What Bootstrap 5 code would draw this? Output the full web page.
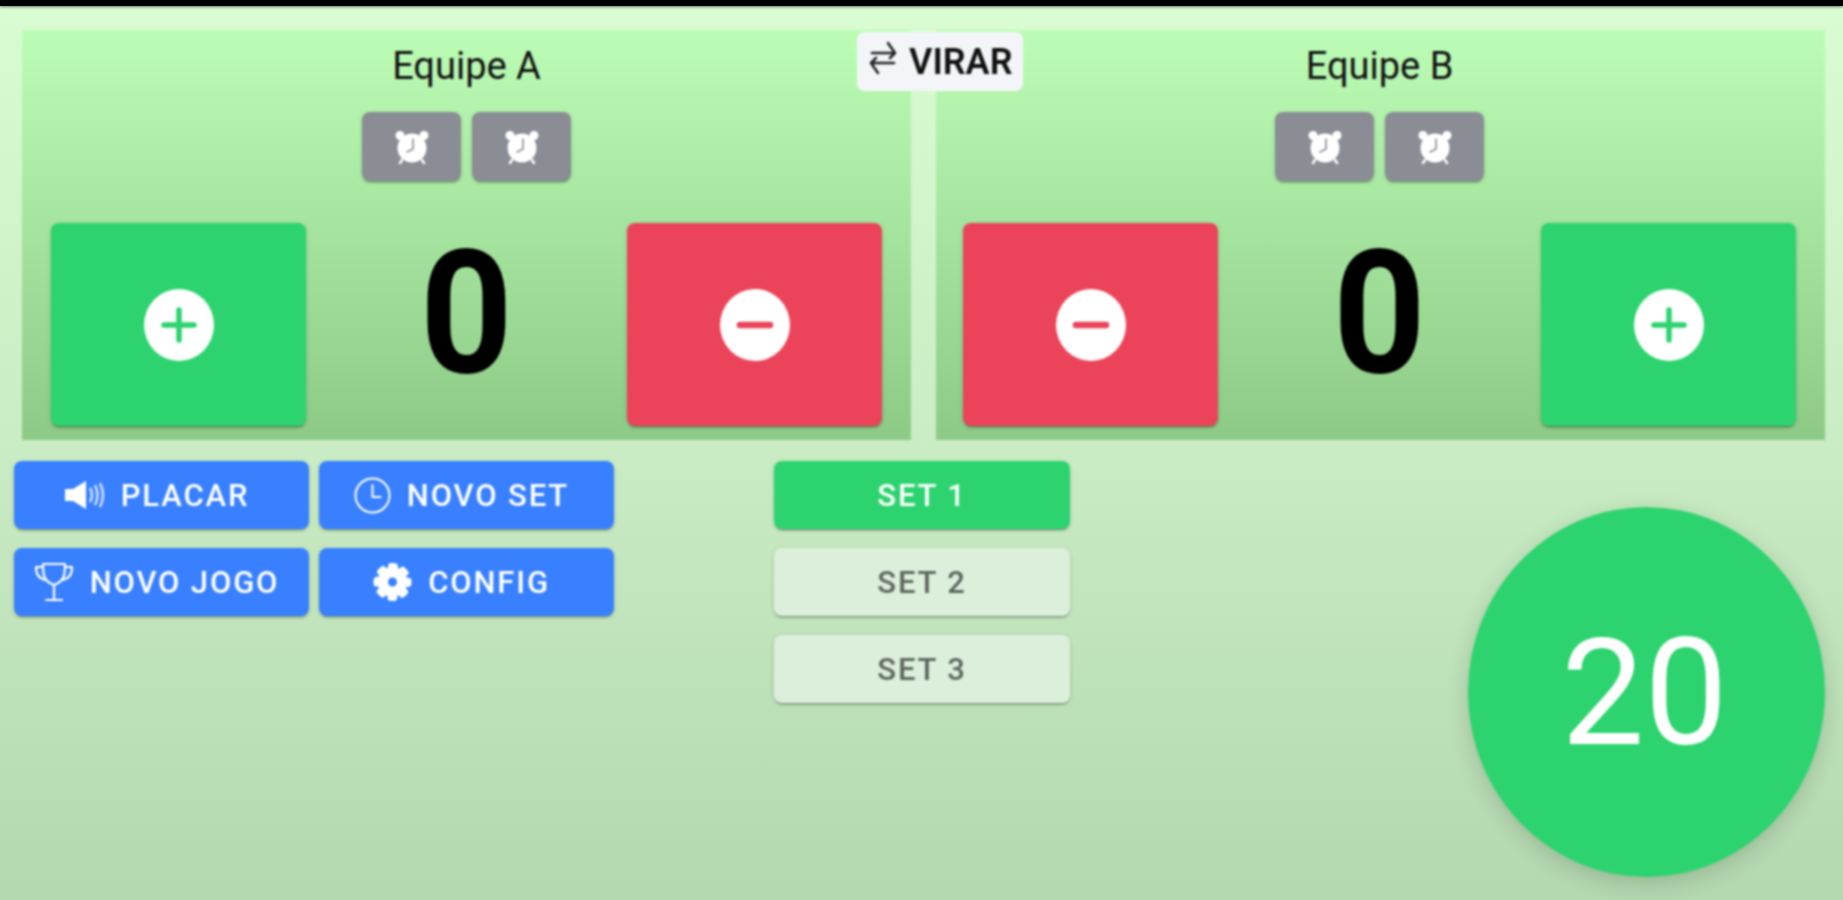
<!DOCTYPE html>
<html lang="pt">
<head>
<meta charset="utf-8">
<title>Placar</title>
<link href="https://cdn.jsdelivr.net/npm/bootstrap@5.3.0/dist/css/bootstrap.min.css" rel="stylesheet">
<style>
html,body{height:900px;overflow:hidden}
body{font-family:Roboto,"Liberation Sans",sans-serif;background:linear-gradient(180deg,#d9fcd2 0,#c9ecc4 50%,#b3d7af 100%);}
.topbar{height:6px;background:#000;box-shadow:0 1px 3px rgba(0,0,0,.5)}
.stage{position:relative;filter:blur(.9px);height:894px}
.panels{padding:24px 18px 0 22px;gap:25px}
.panel{width:889px;height:410px;padding:0 29px 14px 29px;background:linear-gradient(180deg,#bcfdb6 0,#8dca86 100%)}
.panel-right{padding-left:27px}
.team{font-size:38px;line-height:44px;margin-top:14px;height:68px;color:#111}
.alarms{gap:11px;height:69px;margin-bottom:42px}
.tbtn{--bs-btn-padding-x:0;--bs-btn-padding-y:0;--bs-btn-border-width:0;--bs-btn-border-radius:8px;border:0;border-radius:8px;box-shadow:0 3px 1px -2px rgba(0,0,0,.2),0 2px 2px rgba(0,0,0,.14),0 1px 5px rgba(0,0,0,.12);display:flex;align-items:center;justify-content:center;color:#fff}
.tbtn:hover,.tbtn:active{color:#fff}
.alarm-btn{width:99px;height:69px;background:#8b8d95}
.alarm-btn:hover{background:#8b8d95}
.big-btn{width:255px;height:203px}
.c-green,.c-green:hover{background:#2dd36f}
.c-red,.c-red:hover{background:#eb445a}
.c-blue,.c-blue:hover{background:#3880ff}
.score{font-size:172px;font-weight:700;line-height:172px;color:#000;margin-top:-24px;flex:1;text-align:center}
.score span{display:inline-block;transform:scaleX(.94)}
.flipper{position:absolute;left:857px;top:26px;width:166px;height:59px;background:#f4f5f8;border-radius:8px;color:#111;font-size:36px;font-weight:600;gap:12px;padding-left:12px}
.flipper svg{margin-top:-7px}
.lower{padding:21px 18px 0 14px}
.actions{display:grid;grid-template-columns:295px 295px;column-gap:10px;row-gap:19px;width:600px;height:154px}
.label-btn{height:68px;font-size:31px;font-weight:500;letter-spacing:.06em;line-height:1}
.actions .label-btn{padding-right:10px}
.sets{margin-left:160px;width:296px;gap:19px}
.sets .tbtn{width:296px}
.c-soft,.c-soft:hover{background:#dcefdb;color:#5d675f}
.timer{width:357px;height:370px;border-radius:50%;background:#2dd36f;color:#fff;font-size:148px;line-height:1;font-weight:400;margin-top:46px;padding:3px 4px 0 0;box-shadow:0 6px 22px rgba(0,0,0,.16)}
</style>
</head>
<body>
<div class="topbar"></div>
<div class="stage">
  <div class="panels d-flex">
    <section class="panel d-flex flex-column align-items-center">
      <div class="team">Equipe A</div>
      <div class="alarms d-flex">
        <button class="btn tbtn alarm-btn"><svg width="38" height="36" viewBox="0 0 38 36"><use href="#ico-alarm"/></svg></button>
        <button class="btn tbtn alarm-btn"><svg width="38" height="36" viewBox="0 0 38 36"><use href="#ico-alarm"/></svg></button>
      </div>
      <div class="d-flex w-100 align-items-center">
        <button class="btn tbtn big-btn c-green"><svg width="72" height="72" viewBox="0 0 72 72"><use href="#ico-plus"/></svg></button>
        <div class="score"><span>0</span></div>
        <button class="btn tbtn big-btn c-red"><svg width="72" height="72" viewBox="0 0 72 72"><use href="#ico-minus"/></svg></button>
      </div>
    </section>
    <section class="panel panel-right d-flex flex-column align-items-center">
      <div class="team">Equipe B</div>
      <div class="alarms d-flex">
        <button class="btn tbtn alarm-btn"><svg width="38" height="36" viewBox="0 0 38 36"><use href="#ico-alarm"/></svg></button>
        <button class="btn tbtn alarm-btn"><svg width="38" height="36" viewBox="0 0 38 36"><use href="#ico-alarm"/></svg></button>
      </div>
      <div class="d-flex w-100 align-items-center">
        <button class="btn tbtn big-btn c-red"><svg width="72" height="72" viewBox="0 0 72 72"><use href="#ico-minus"/></svg></button>
        <div class="score"><span>0</span></div>
        <button class="btn tbtn big-btn c-green"><svg width="72" height="72" viewBox="0 0 72 72"><use href="#ico-plus"/></svg></button>
      </div>
    </section>
  </div>

  <div class="flipper d-flex align-items-center">
    <svg width="28" height="36" viewBox="0 0 28 36" fill="none" stroke="#222" stroke-width="2.6" stroke-linecap="round" stroke-linejoin="round"><path d="M3 13H26M19 3l7 10-5 5M25 23H2M9 33L2 23l5-5"/></svg>
    <span>VIRAR</span>
  </div>

  <div class="lower d-flex align-items-start">
    <div class="actions">
      <button class="btn tbtn label-btn c-blue">
        <svg class="me-3" width="41" height="30" viewBox="0 0 41 30" fill="#fff"><path d="M1 9h8L22 1v28L9 21H1z"/><path d="M26 8q4 7 0 14M31 5q5 10 0 20M36 3q6 12 0 24" fill="none" stroke="#fff" stroke-width="2.6" opacity=".75"/></svg>PLACAR
      </button>
      <button class="btn tbtn label-btn c-blue">
        <svg class="me-3" width="37" height="37" viewBox="0 0 37 37" fill="none" stroke="#fff" stroke-width="2"><circle cx="18.5" cy="18.5" r="17"/><path d="M18.5 8v12h8" stroke-linecap="round" stroke-linejoin="round"/></svg>NOVO SET
      </button>
      <button class="btn tbtn label-btn c-blue">
        <svg class="me-3" width="40" height="40" viewBox="0 0 40 40" fill="none" stroke="#fff" stroke-width="2.2" stroke-linejoin="round" stroke-linecap="round"><path d="M9 2h22c0 10 0 17-11 21C9 19 9 12 9 2zM9 5H2c0 7 3 12 10 13M31 5h7c0 7-3 12-10 13M20 23v14M12 38h16"/></svg>NOVO JOGO
      </button>
      <button class="btn tbtn label-btn c-blue">
        <svg class="me-3" width="39" height="42" viewBox="0 0 39 42"><g transform="translate(19.5 21)"><circle r="15" fill="#fff"/><circle r="16" fill="none" stroke="#fff" stroke-width="6" stroke-linecap="round" stroke-dasharray="4 8.57" stroke-dashoffset="2"/><circle r="4.5" fill="#3880ff"/></g></svg>CONFIG
      </button>
    </div>
    <div class="sets d-flex flex-column">
      <button class="btn tbtn label-btn c-green">SET 1</button>
      <button class="btn tbtn label-btn c-soft">SET 2</button>
      <button class="btn tbtn label-btn c-soft">SET 3</button>
    </div>
    <div class="timer ms-auto d-flex align-items-center justify-content-center">20</div>
  </div>
</div>

<svg width="0" height="0" class="position-absolute" aria-hidden="true">
  <defs>
    <g id="ico-plus"><ellipse cx="36" cy="36" rx="35" ry="36" fill="#fff"/><path d="M36 21v30M21 36h30" stroke="#2dd36f" stroke-width="5.5" stroke-linecap="round"/></g>
    <g id="ico-minus"><ellipse cx="36" cy="36" rx="35" ry="36" fill="#fff"/><path d="M21 36h30" stroke="#eb445a" stroke-width="6.5" stroke-linecap="round"/></g>
    <g id="ico-alarm"><circle cx="19" cy="19" r="14.5" fill="#fff"/><circle cx="7" cy="6.5" r="4.5" fill="#fff"/><circle cx="31" cy="6.5" r="4.5" fill="#fff"/><path d="M9 31l-2 3M29 31l2 3" stroke="#fff" stroke-width="2.6" stroke-linecap="round"/><path d="M20 10v10l-6 3" fill="none" stroke="#8b8d95" stroke-width="1.6" stroke-linecap="round"/></g>
  </defs>
</svg>
</body>
</html>
